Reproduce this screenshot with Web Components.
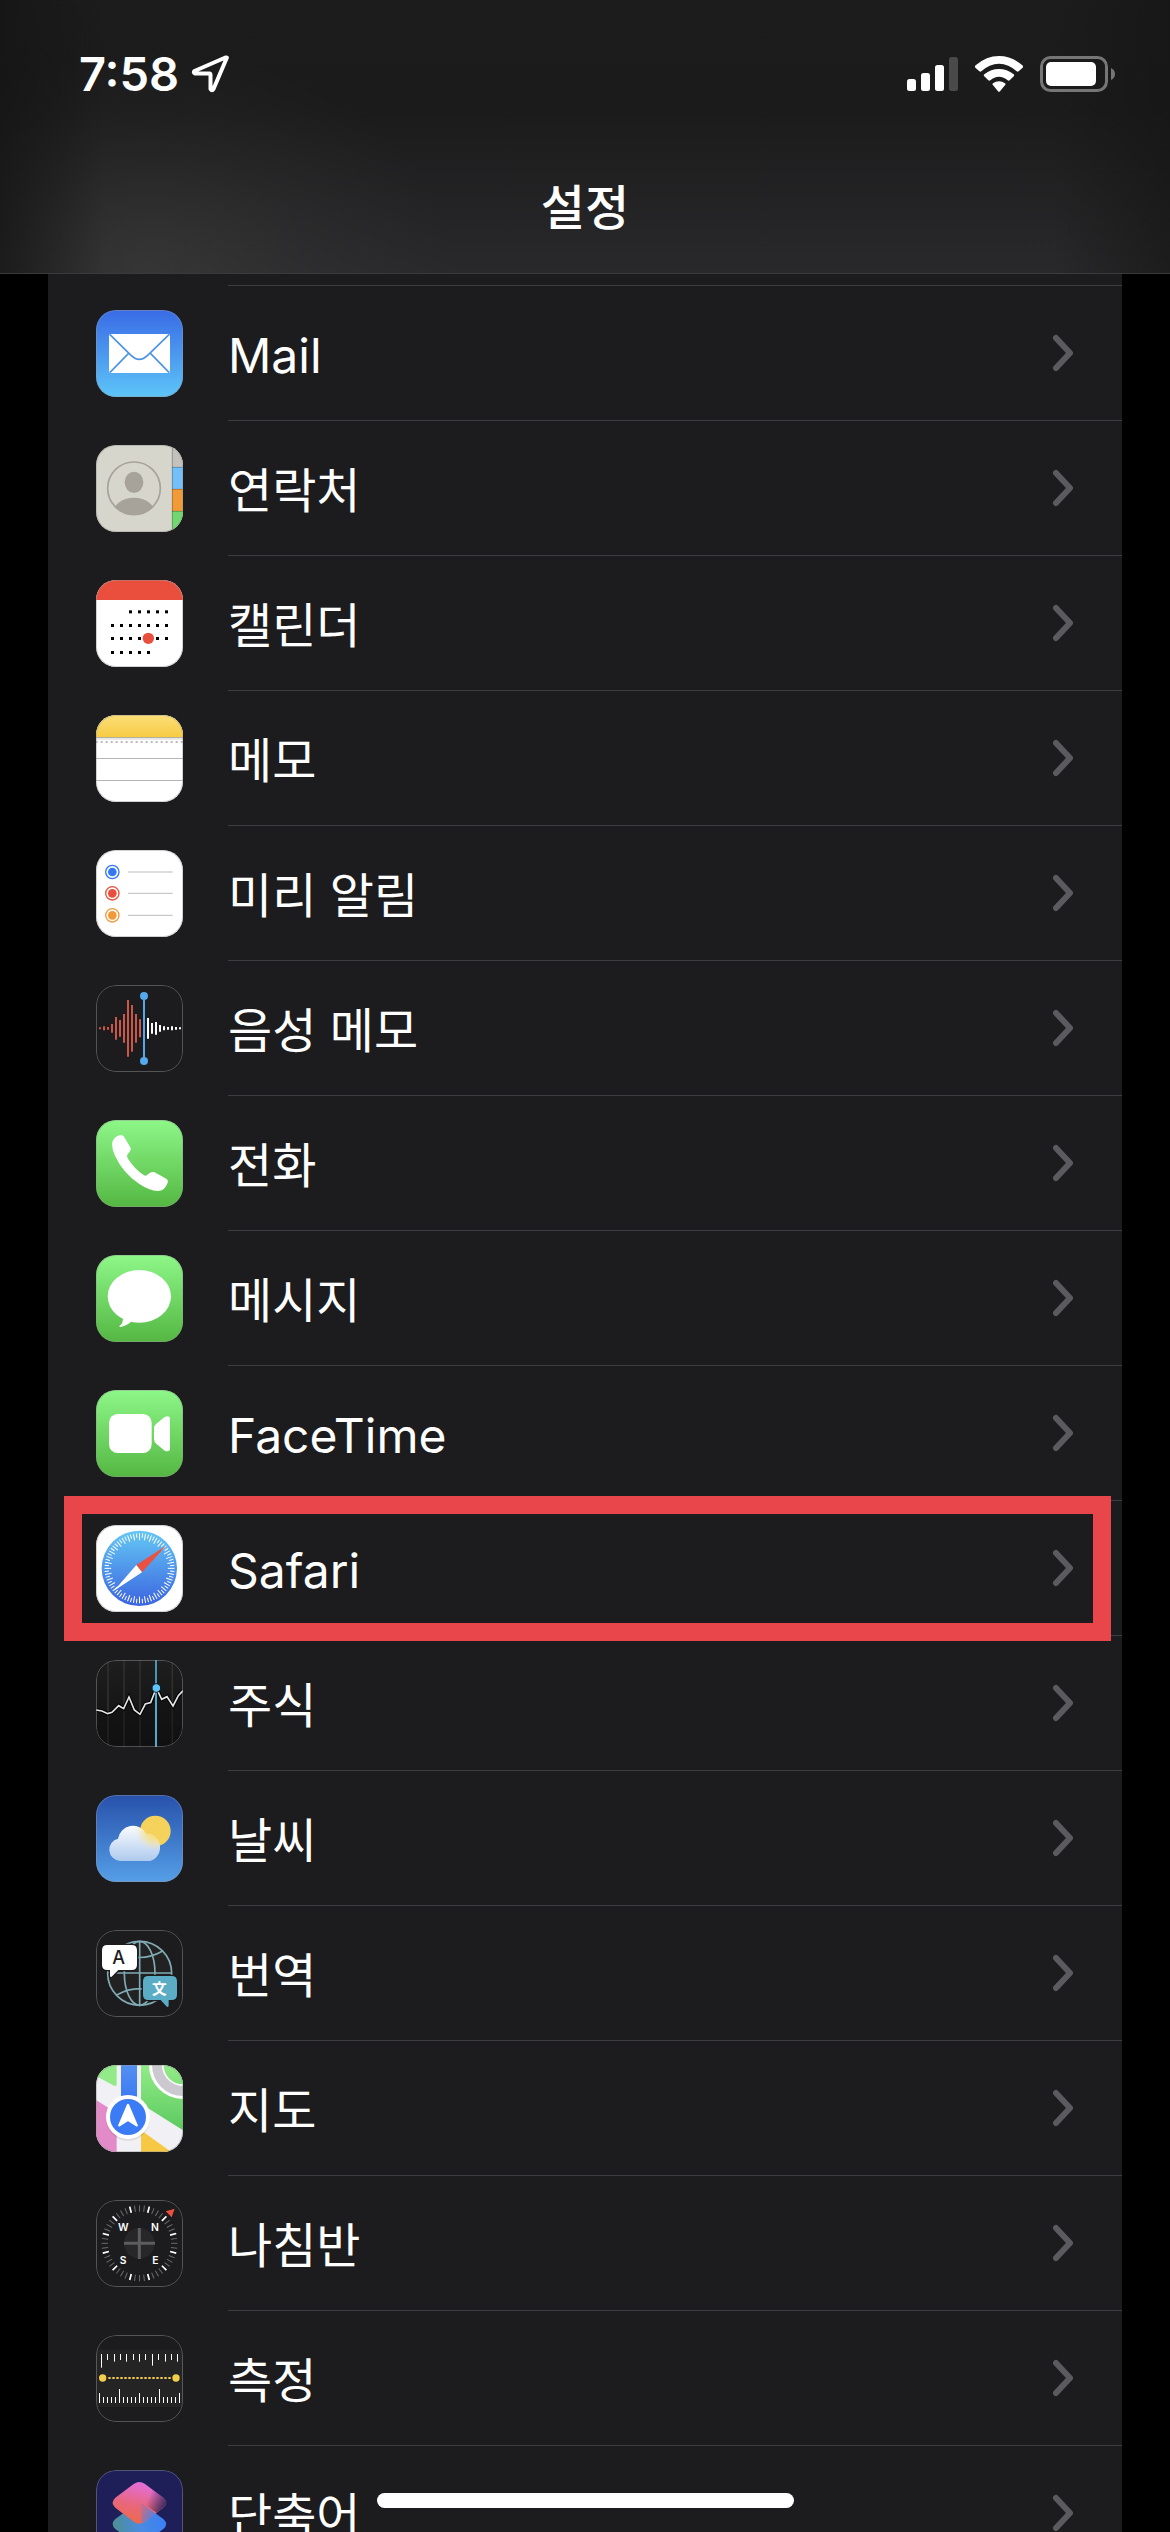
<!DOCTYPE html>
<html lang="ko">

<head>
    <meta charset="UTF-8">
    <meta name="viewport" content="width=device-width, initial-scale=1.0">
    <title>설정</title>
    <style>
        body {
            margin: 0;
            background: #000;
            color: #fff;
            font-family: Inter, "Noto Sans CJK KR", sans-serif;
            font-size: 48px;
        }
    </style>
</head>

<body>
    <phone-screen>
        <status-bar slot="top" time="7:58"></status-bar>
        <nav-title slot="top">설정</nav-title>

        <settings-row icon="mail">Mail</settings-row>
        <settings-row icon="contacts">연락처</settings-row>
        <settings-row icon="calendar">캘린더</settings-row>
        <settings-row icon="notes">메모</settings-row>
        <settings-row icon="reminders">미리 알림</settings-row>
        <settings-row icon="voice">음성 메모</settings-row>
        <settings-row icon="phone">전화</settings-row>
        <settings-row icon="messages">메시지</settings-row>
        <settings-row icon="facetime">FaceTime</settings-row>
        <settings-row icon="safari" marked>Safari</settings-row>
        <settings-row icon="stocks">주식</settings-row>
        <settings-row icon="weather">날씨</settings-row>
        <settings-row icon="translate">번역</settings-row>
        <settings-row icon="maps">지도</settings-row>
        <settings-row icon="compass">나침반</settings-row>
        <settings-row icon="measure">측정</settings-row>
        <settings-row icon="shortcuts">단축어</settings-row>
    </phone-screen>

    <template id="screen-template">
        <style>
            :host {
                display: flex;
                flex-direction: column;
                height: 100vh;
                overflow: hidden;
                position: relative;
            }

            header {
                flex: none;
                border-bottom: 1px solid #3a3a3c;
                background:
                    linear-gradient(90deg, rgba(20, 20, 19, .7), transparent 9%, transparent 90%, rgba(20, 20, 20, .6)),
                    radial-gradient(ellipse 300px 220px at 13% 100%, rgba(62, 62, 62, .6), rgba(62, 62, 62, .2) 55%, transparent),
                    linear-gradient(#1c1c1d, #1b1b1c 40%, #29292b);
            }

            main {
                flex: 1;
                min-height: 0;
                overflow: hidden;
                margin: 0 48px;
                padding-top: 11px;
                background: #1c1c1e;
            }

            .home {
                position: absolute;
                left: 50%;
                bottom: 24px;
                width: 417px;
                height: 15px;
                margin-left: -208px;
                border-radius: 8px;
                background: #fff;
            }
        </style>
        <header><slot name="top"></slot></header>
        <main><slot></slot></main>
        <div class="home"></div>
    </template>

    <template id="status-template">
        <style>
            :host {
                display: flex;
                align-items: center;
                justify-content: space-between;
                height: 148px;
                padding: 0 54px 0 79px;
            }

            div { display: flex; align-items: center; gap: 12px; }
            .right { gap: 17px; }
            time { font-size: 47px; font-weight: 600; line-height: 60px; }
            svg { display: block; }
        </style>
        <div>
            <time></time>
            <svg width="38" height="38" viewBox="0 0 38 38" fill="none" stroke="#fff" stroke-width="4" stroke-linejoin="round">
                <path d="M35.500 3.500Q36.500 2 34.500 2.500L3.500 16Q2 17.500 4 18.500H18.500Q19.500 18.500 19.500 20V34Q21 36.500 22.500 34Z" />
            </svg>
        </div>
        <div class="right">
            <svg width="51" height="36" viewBox="0 0 51 36" fill="#fff">
                <rect y="23" width="9" height="12" rx="2.500" />
                <rect x="14" y="17" width="9" height="18" rx="2.500" />
                <rect x="28" y="9" width="9" height="26" rx="2.500" />
                <rect x="42" y="1" width="9" height="34" rx="2.500" fill="#4a4a4b" />
            </svg>
            <svg width="48" height="36" viewBox="0 0 144 108" fill="#fff">
                <path d="M1 35Q-2 31 2 28Q34 0 72 0T142 28Q146 31 143 35L131 46Q128 48 125 46Q101 23 72 23T19 46Q16 48 13 46Z" />
                <path d="M27 60Q25 57 28 55Q48 39 72 39T116 55Q119 57 117 60L104 73Q101 75 98 73Q86 62 72 62T46 73Q43 75 40 73Z" />
                <path d="M53 86Q51 84 54 82Q62 76 72 76T90 82Q93 84 91 86L75 106Q72 109 69 106Z" />
            </svg>
            <svg width="76" height="36" viewBox="0 0 76 36" fill="none">
                <rect x="1.500" y="1.500" width="65" height="33" rx="9" stroke="#767677" stroke-width="3" />
                <rect x="6" y="6" width="50" height="24" rx="5" fill="#fff" />
                <path d="M71 12Q75 14 75 18T71 24Z" fill="#767677" />
            </svg>
        </div>
    </template>

    <template id="title-template">
        <style>
            :host { display: block; height: 125px; text-align: center; }
            h1 { margin: 0; font-size: 48px; font-weight: 500; line-height: 120px; }
        </style>
        <h1><slot></slot></h1>
    </template>

    <template id="row-template">
        <style>
            :host { display: block; position: relative; }

            a {
                display: flex;
                align-items: center;
                padding-left: 48px;
                color: inherit;
                text-decoration: none;
            }

            app-icon { margin-top: 2px; }

            .body {
                display: flex;
                flex: 1;
                align-items: center;
                justify-content: space-between;
                height: 134px;
                margin-left: 45px;
                padding-right: 48px;
                border-top: 1px solid #3d3d41;
            }

            span { line-height: 60px; padding-top: 6px; }

            :host([marked])::after {
                content: "";
                position: absolute;
                z-index: 1;
                top: -4px;
                bottom: -6px;
                left: 16px;
                right: 11px;
                border: 18px solid #e9464b;
            }
        </style>
        <a href="#">
            <app-icon></app-icon>
            <div class="body">
                <span><slot></slot></span>
                <svg width="24" height="38" viewBox="0 0 24 38" fill="none" stroke="#5b5b5f" stroke-width="6" stroke-linecap="round" stroke-linejoin="round">
                    <path d="M6 4L20 19L6 34" />
                </svg>
            </div>
        </a>
    </template>

    <script>
        // 반복되는 눈금, 점 그리기
        const range = (n) => Array.from({ length: n }, (_, i) => i);
        const line = (x1, y1, x2, y2) => `<path d="M${x1} ${y1}L${x2} ${y2}"/>`;
        const tick = (deg, from, to) => `<path d="M130.500 ${130 - from}V${130 - to}" transform="rotate(${deg} 130.500 130)"/>`;
        const fade = (id, top, bottom) => `<linearGradient id="${id}" x2="0" y2="1"><stop stop-color="${top}"/><stop offset="1" stop-color="${bottom}"/></linearGradient>`;
        const fill = (color) => `<rect width="261" height="261" fill="${color}"/>`;
        const green = fade('bg', '#8df788', '#54b742') + fill('url(#bg)');

        const calendarDots = [[95, 2, 7], [136, 0, 7], [175, 0, 7], [217, 0, 5]]
            .map(([y, a, b]) => range(7).slice(a, b).map(i => `<rect x="${45 + i * 27}" y="${y - 4}" width="9" height="9"/>`).join(''))
            .join('');

        const redWave = [3, 6, 4, 13, 34, 25, 43, 85, 70, 43, 27];
        const whiteWave = [31, 16, 19, 10, 6, 4, 6, 4, 3];
        const wave = (list, x) => list.map((h, i) => line(x + i * 12, 130 - h, x + i * 12, 130 + h)).join('');

        const icons = {
            mail: fade('bg', '#396be6', '#5dc5f8') + fill('url(#bg)') + `
                <rect x="39" y="72" width="183" height="117" rx="7" fill="#fff"/>
                <path d="M42 74L105 136Q130 160 155 136L219 74M42 187L97 131M219 187L164 131" fill="none" stroke="#4d94e4" stroke-width="5"/>`,

            contacts: fill('#d6d6cc') + `
                <path d="M228 0h33v66h-33z" fill="#c3c2bd"/><path d="M228 66h33v66h-33z" fill="#74bff8"/>
                <path d="M228 132h33v66h-33z" fill="#f19a38"/><path d="M228 198h33v63h-33z" fill="#74d673"/>
                <path d="M228 67h33M228 133h33M228 199h33M229 0v261" stroke="#000" stroke-opacity=".25" stroke-width="3"/>
                <clipPath id="c"><circle cx="114" cy="130" r="80"/></clipPath>
                <g fill="#a7a39b"><ellipse cx="114" cy="112" rx="28" ry="32"/><ellipse cx="114" cy="210" rx="65" ry="52" clip-path="url(#c)"/></g>
                <circle cx="114" cy="130" r="79" fill="none" stroke="#a7a39b" stroke-width="5"/>`,

            calendar: fill('#fff') + `<path d="M0 0h261v60H0z" fill="#ea4f3e"/>${calendarDots}<circle cx="157" cy="175" r="17" fill="#ea4f3e"/>`,

            notes: fade('y', '#fbdf78', '#f7cb43') + fill('#fff') + `
                <rect width="261" height="67" fill="url(#y)"/>
                <path d="M0 68h261" stroke="#b9b09a" stroke-width="4"/><path d="M0 72h261" stroke="#e4e4e4" stroke-width="4"/>
                <path d="M-1 81h261" stroke="#bbb" stroke-width="6" stroke-dasharray="6 9"/>
                <path d="M0 130.500h261M0 196.500h261" stroke="#b5b5b5" stroke-width="3"/>`,

            reminders: fill('#fff') + [['#3478f6', 66], ['#ea4e3d', 130], ['#f19a37', 196]].map(([c, y]) => `
                <circle cx="49" cy="${y}" r="20" fill="none" stroke="${c}" stroke-width="4"/><circle cx="49" cy="${y}" r="13" fill="${c}"/>
                <path d="M96 ${y}h134" stroke="#bdbdbd" stroke-width="3"/>`).join(''),

            voice: fill('#1c1c1e') + `
                <g stroke="#c9584b" stroke-width="6">${wave(redWave, 12)}</g><g stroke="#fff" stroke-width="6">${wave(whiteWave, 156)}</g>
                <path d="M144 33v195" stroke="#55a8ec" stroke-width="6"/><circle cx="144" cy="33" r="12" fill="#55a8ec"/><circle cx="144" cy="228" r="12" fill="#55a8ec"/>`,

            phone: green + `<path fill="#fff" d="M74 45Q80 44 84 50L103 82Q107 89 102 94L95 103Q91 108 95 115Q116 148 144 166Q149 169 153 165L162 158Q169 154 176 157L212 177Q218 182 215 188Q206 213 186 213Q160 212 130 192Q80 158 57 107Q48 88 48 72Q51 49 74 45Z"/>`,

            messages: green + `<g fill="#fff"><ellipse cx="130" cy="124" rx="95" ry="79"/><path d="M81 188Q82 205 70 213Q69 216 74 216Q95 210 106 200Z"/></g>`,

            facetime: green + `<g fill="#fff"><rect x="39" y="72" width="128" height="117" rx="26"/><path d="M174 115Q174 106 181 101L206 81Q222 74 222 87V175Q222 188 206 182L181 161Q174 156 174 148Z"/></g>`,

            safari: fade('s', '#64c8f4', '#3b64e0') + fill('#fff') + `
                <circle cx="130" cy="130" r="113" fill="url(#s)"/>
                <g stroke="#fff" stroke-width="3">${range(72).map(i => tick(i * 5, 105, i % 2 ? 92 : 85)).join('')}</g>
                <path d="M210 62L121 120L138 142Z" fill="#ea5140"/><path d="M54 197L121 120L138 142Z" fill="#fff"/>`,

            stocks: fade('bg', '#1e1e1f', '#101010') + fill('url(#bg)') + `
                <path d="M36 0v261M84 0v261M132 0v261M229 0v261" stroke="#303031" stroke-width="5"/>
                <path d="M0 150L18 153L35 161L48 157L68 137L83 146L99 111L115 150L132 163L148 132L164 128L181 84L197 118L213 110L231 138L247 107L261 92V261H0Z" fill="#111" fill-opacity=".5"/>
                <path d="M180 0v261" stroke="#55aed6" stroke-width="5"/>
                <path d="M0 150L18 153L35 161L48 157L68 137L83 146L99 111L115 150L132 163L148 132L164 128L181 84L197 118L213 110L231 138L247 107L261 92" fill="none" stroke="#000" stroke-width="11"/>
                <path d="M0 150L18 153L35 161L48 157L68 137L83 146L99 111L115 150L132 163L148 132L164 128L181 84L197 118L213 110L231 138L247 107L261 92" fill="none" stroke="#e4e4e4" stroke-width="5"/>
                <path d="M180 90v171" stroke="#55aed6" stroke-width="5"/>
                <circle cx="181" cy="84" r="13" fill="#5fc4f6" stroke="#0d1a20" stroke-width="3"/>`,

            weather: fade('bg', '#2751ab', '#559fe7') + fade('c', '#fbfcff', '#aecaee') + fill('url(#bg)') + `
                <radialGradient id="g" gradientUnits="userSpaceOnUse" cx="178" cy="107" r="60"><stop offset=".4" stop-color="#f7de7c" stop-opacity=".9"/><stop offset="1" stop-color="#f7e6a0" stop-opacity="0"/></radialGradient>
                <circle cx="178" cy="108" r="46" fill="#f5d25b"/>
                <path d="M72 198A34 34 0 0 1 66 131A45 45 0 0 1 150 116A42 42 0 0 1 163 198Z" fill="url(#c)"/>
                <path d="M72 198A34 34 0 0 1 66 131A45 45 0 0 1 150 116A42 42 0 0 1 163 198Z" fill="url(#g)"/>`,

            translate: fill('#1c1c1e') + `
                <circle cx="131" cy="130" r="96" fill="#222223"/>
                <g fill="none" stroke="#80aab4" stroke-width="5">
                    <circle cx="131" cy="130" r="96"/><ellipse cx="131" cy="130" rx="46" ry="96"/>
                    <path d="M131 34v192M35 129h192M62 63Q131 102 200 63M62 195Q131 157 200 195"/>
                </g>
                <path d="M34 45H107Q123 45 123 61V104Q123 120 107 120H67L47 140Q42 144 42 136V120H34Q18 120 18 104V61Q18 45 34 45Z" fill="#fff" stroke="#1c1c1e" stroke-width="8" paint-order="stroke"/>
                <path d="M157 138H227Q243 138 243 154V194Q243 210 227 210H218V226Q218 234 211 229L194 210H157Q141 210 141 194V154Q141 138 157 138Z" fill="#5bacc5" stroke="#1c1c1e" stroke-width="8" paint-order="stroke"/>
                <text x="68" y="102" font-size="54" font-weight="500" fill="#1c1c1e">A</text>
                <text x="190" y="191" font-size="44" font-weight="700" fill="#fff">文</text>`,

            maps: fade('g', '#93eb88', '#5bca5f') + fade('b', '#5590f2', '#3a78f3') + fill('#f1f0f5') + `
                <path d="M0 0H62V57Q62 66 54 62L0 33Z" fill="#93ea89"/>
                <path d="M0 105L62 144V261H0Z" fill="#e38ac8"/>
                <path d="M135 0H261V196L135 116Z" fill="url(#g)"/>
                <path d="M135 196L226 261H135Z" fill="#f6c843"/>
                <circle cx="261" cy="0" r="80" fill="none" stroke="#fff" stroke-width="44"/><circle cx="261" cy="0" r="78" fill="none" stroke="#cbc9cf" stroke-width="30"/>
                <path d="M75 0h48v110H75z" fill="url(#b)"/>
                <circle cx="96" cy="162" r="66" fill="#000" fill-opacity=".08"/>
                <circle cx="96" cy="156" r="60" fill="#3b7cf6" stroke="#fff" stroke-width="12"/>
                <path d="M96 120L122 181L96 164L70 181Z" fill="#fff" stroke="#fff" stroke-width="7" stroke-linejoin="round"/>`,

            compass: fill('#1c1c1e') + `
                <g stroke="#6c6c6d" stroke-width="3">${range(48).map(i => tick(i * 7.5, 114, 95)).join('')}</g>
                <g stroke="#fff" stroke-width="5">${range(12).map(i => tick(i * 30 + 15, 114, 95)).join('')}</g>
                <circle cx="130" cy="130" r="46" fill="#272729"/>
                <path d="M130 84v93M84 130h93" stroke="#5d5d5e" stroke-width="9"/>
                <path d="M209 34L236 26L227 52Z" fill="#e8503f"/>
                <g font-size="31" font-weight="600" fill="#fff"><text x="82" y="93">W</text><text x="177" y="93">N</text><text x="81" y="192">S</text><text x="178" y="192">E</text></g>`,

            measure: fill('#1c1c1e') + `
                <path d="M0 45h261v171H0z" fill="#242424"/>
                <g stroke="#fff" stroke-width="3">
                    ${[98, 75, 80, 75, 80, 75, 80, 75, 92, 75, 80, 75, 80].map((y, i) => line(16.5 + Math.round(i * 6.35) * 3, 57, 16.5 + Math.round(i * 6.35) * 3, y)).join('')}
                    ${range(21).map(i => line(10.5 + i * 12, 204, 10.5 + i * 12, i % 10 === 5 ? 162 : i % 5 ? 186 : 174)).join('')}
                </g>
                <path d="M37 129h188" stroke="#f3ce4b" stroke-width="6" stroke-dasharray="7 5"/>
                <circle cx="20" cy="129" r="11" fill="#f3ce4b"/><circle cx="240" cy="129" r="11" fill="#f3ce4b"/>`,

            shortcuts: fill('#1e1f59') + `
                <linearGradient id="d" x1="0" y1=".6" x2="1" y2=".5"><stop stop-color="#4d8f8f"/><stop offset=".5" stop-color="#4a8be0"/><stop offset="1" stop-color="#3a80f6"/></linearGradient>
                <linearGradient id="u" x1=".5" y1="0" x2=".2" y2="1"><stop stop-color="#e36ddc"/><stop offset=".55" stop-color="#e8677a"/><stop offset="1" stop-color="#ef6a43"/></linearGradient>
                <linearGradient id="v" x1=".5" y1=".4" x2="1" y2=".6"><stop stop-color="#2c2458" stop-opacity="0"/><stop offset="1" stop-color="#2c2458" stop-opacity=".85"/></linearGradient>
                <linearGradient id="w" x1="0" y1="0" x2="1" y2=".6"><stop stop-color="#b0708f" stop-opacity=".5"/><stop offset="1" stop-color="#4584f0"/></linearGradient>
                <path d="M113 107Q130 95 147 107L202 147Q219 162 202 177L147 219Q130 231 113 219L58 177Q42 162 58 147Z" fill="url(#d)"/>
                <path d="M113 42Q130 30 147 42L202 83Q219 98 202 113L147 155Q130 167 113 155L58 113Q42 98 58 83Z" fill="url(#u)"/>
                <path d="M113 42Q130 30 147 42L202 83Q219 98 202 113L182 128L136 97L113 107Z" fill="url(#v)"/>
                <path d="M136 99L147 107L179 131L147 155Q141 159 136 160Z" fill="url(#w)"/>`
        };

        class TemplateElement extends HTMLElement {
            constructor() {
                super();
                this.attachShadow({ mode: 'open' });
                const template = document.getElementById(this.constructor.template);
                this.shadowRoot.append(template.content.cloneNode(true));
            }
        }

        class PhoneScreen extends TemplateElement {
            static template = 'screen-template';
        }

        class StatusBar extends TemplateElement {
            static template = 'status-template';

            connectedCallback() {
                this.shadowRoot.querySelector('time').textContent = this.getAttribute('time');
            }
        }

        class NavTitle extends TemplateElement {
            static template = 'title-template';
        }

        class AppIcon extends HTMLElement {
            static observedAttributes = ['name'];

            constructor() {
                super();
                this.attachShadow({ mode: 'open' });
            }

            attributeChangedCallback() {
                this.shadowRoot.innerHTML = `
                    <style>
                        :host { display: block; flex: none; width: 87px; height: 87px; }
                        svg { display: block; width: 100%; height: 100%; border-radius: 20px; }
                        text { text-anchor: middle; }
                    </style>
                    <svg viewBox="0 0 261 261" aria-hidden="true">
                        ${icons[this.getAttribute('name')] || ''}
                        <rect x="1.500" y="1.500" width="258" height="258" rx="59" fill="none" stroke="#999" stroke-opacity=".45" stroke-width="3"/>
                    </svg>`;
            }
        }

        class SettingsRow extends TemplateElement {
            static template = 'row-template';

            connectedCallback() {
                this.shadowRoot.querySelector('app-icon').setAttribute('name', this.getAttribute('icon'));
            }
        }

        customElements.define('app-icon', AppIcon);
        customElements.define('status-bar', StatusBar);
        customElements.define('nav-title', NavTitle);
        customElements.define('settings-row', SettingsRow);
        customElements.define('phone-screen', PhoneScreen);
    </script>
</body>

</html>
